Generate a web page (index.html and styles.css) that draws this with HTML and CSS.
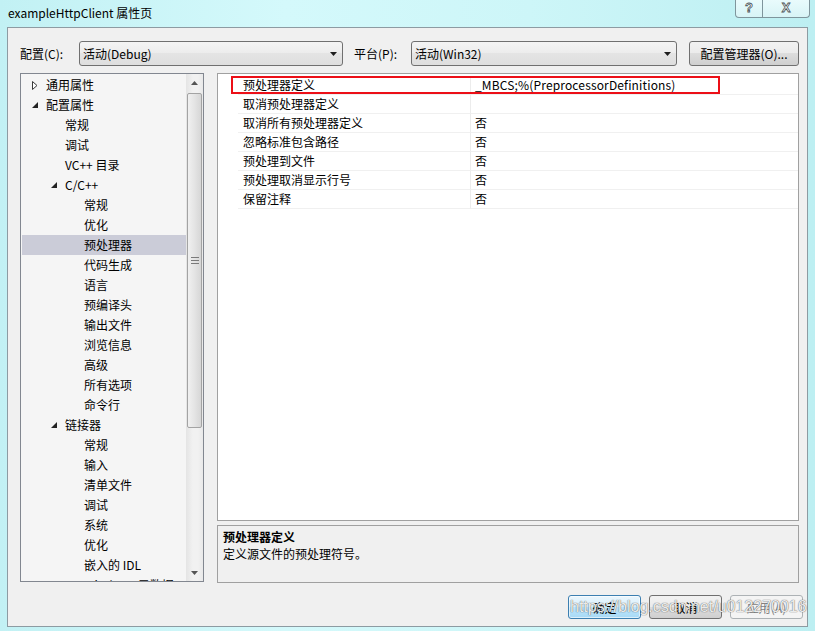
FILE: index.html
```html
<!DOCTYPE html>
<html lang="zh-CN">
<head>
<meta charset="utf-8">
<title>exampleHttpClient 属性页</title>
<link rel="stylesheet" href="styles.css">
</head>
<body>
<div class="window">
  <div class="titlebar">
    <div class="title">exampleHttpClient 属性页</div>
    <div class="caption-btns">
      <div class="cap-btn help">?</div>
      <div class="cap-btn close">X</div>
    </div>
  </div>
  <div class="client">
    <div class="config-row">
      <div class="lbl lbl-config">配置(C):</div>
      <div class="combo combo-config">
        <span>活动(Debug)</span>
        <svg class="drop" width="7" height="4" viewBox="0 0 7 4"><path d="M0 0 H7 L3.5 4 Z" fill="#1e1e1e"/></svg>
      </div>
      <div class="lbl lbl-platform">平台(P):</div>
      <div class="combo combo-platform">
        <span>活动(Win32)</span>
        <svg class="drop" width="7" height="4" viewBox="0 0 7 4"><path d="M0 0 H7 L3.5 4 Z" fill="#1e1e1e"/></svg>
      </div>
      <div class="btn btn-manager">配置管理器(O)...</div>
    </div>

    <div class="main">
      <div class="tree">
        <div class="tree-list">
          <div class="row l0"><span class="arr"><svg width="6" height="9" viewBox="0 0 6 9"><path d="M0.5 0.5 L5 4.5 L0.5 8.5 Z" fill="#fff" stroke="#3a3a3a" stroke-width="1"/></svg></span>通用属性</div>
          <div class="row l0"><span class="arr"><svg width="6" height="6" viewBox="0 0 6 6"><path d="M6 0 V6 H0 Z" fill="#222"/></svg></span>配置属性</div>
          <div class="row l1"><span class="arr"></span>常规</div>
          <div class="row l1"><span class="arr"></span>调试</div>
          <div class="row l1"><span class="arr"></span>VC++ 目录</div>
          <div class="row l1"><span class="arr"><svg width="6" height="6" viewBox="0 0 6 6"><path d="M6 0 V6 H0 Z" fill="#222"/></svg></span>C/C++</div>
          <div class="row l2"><span class="arr"></span>常规</div>
          <div class="row l2"><span class="arr"></span>优化</div>
          <div class="row l2 selected"><span class="arr"></span>预处理器</div>
          <div class="row l2"><span class="arr"></span>代码生成</div>
          <div class="row l2"><span class="arr"></span>语言</div>
          <div class="row l2"><span class="arr"></span>预编译头</div>
          <div class="row l2"><span class="arr"></span>输出文件</div>
          <div class="row l2"><span class="arr"></span>浏览信息</div>
          <div class="row l2"><span class="arr"></span>高级</div>
          <div class="row l2"><span class="arr"></span>所有选项</div>
          <div class="row l2"><span class="arr"></span>命令行</div>
          <div class="row l1"><span class="arr"><svg width="6" height="6" viewBox="0 0 6 6"><path d="M6 0 V6 H0 Z" fill="#222"/></svg></span>链接器</div>
          <div class="row l2"><span class="arr"></span>常规</div>
          <div class="row l2"><span class="arr"></span>输入</div>
          <div class="row l2"><span class="arr"></span>清单文件</div>
          <div class="row l2"><span class="arr"></span>调试</div>
          <div class="row l2"><span class="arr"></span>系统</div>
          <div class="row l2"><span class="arr"></span>优化</div>
          <div class="row l2"><span class="arr"></span>嵌入的 IDL</div>
          <div class="row l2"><span class="arr"></span>Windows 元数据</div>
        </div>
        <div class="vscroll">
          <div class="sb-arrow"><svg width="7" height="4" viewBox="0 0 7 4"><path d="M0 4 L3.5 0 L7 4 Z" fill="#555"/></svg></div>
          <div class="thumb">
            <svg class="grip" width="8" height="7" viewBox="0 0 8 7"><path d="M0 0.5 H8 M0 3.5 H8 M0 6.5 H8" stroke="#7a7a7a" stroke-width="1"/></svg>
          </div>
          <div class="sb-fill"></div>
          <div class="sb-arrow"><svg width="7" height="4" viewBox="0 0 7 4"><path d="M0 0 H7 L3.5 4 Z" fill="#555"/></svg></div>
        </div>
      </div>

      <div class="right">
        <div class="grid">
          <div class="grow"><div class="gutter"></div><div class="name">预处理器定义</div><div class="val">_MBCS;%(PreprocessorDefinitions)</div></div>
          <div class="grow"><div class="gutter"></div><div class="name">取消预处理器定义</div><div class="val"></div></div>
          <div class="grow"><div class="gutter"></div><div class="name">取消所有预处理器定义</div><div class="val">否</div></div>
          <div class="grow"><div class="gutter"></div><div class="name">忽略标准包含路径</div><div class="val">否</div></div>
          <div class="grow"><div class="gutter"></div><div class="name">预处理到文件</div><div class="val">否</div></div>
          <div class="grow"><div class="gutter"></div><div class="name">预处理取消显示行号</div><div class="val">否</div></div>
          <div class="grow"><div class="gutter"></div><div class="name">保留注释</div><div class="val">否</div></div>
          <div class="redbox"></div>
        </div>
        <div class="desc">
          <div class="desc-title">预处理器定义</div>
          <div class="desc-text">定义源文件的预处理符号。</div>
        </div>
      </div>
    </div>

    <div class="footer">
      <div class="btn btn-default">确定</div>
      <div class="btn">取消</div>
      <div class="btn btn-disabled">应用(A)</div>
      <div class="watermark">https://blog.csdn.net/u012270016</div>
    </div>
  </div>
</div>
</body>
</html>
```

FILE: styles.css
```css
* { box-sizing: border-box; }
html, body { margin: 0; padding: 0; }
body {
  width: 815px;
  height: 631px;
  overflow: hidden;
  font-family: "Noto Sans CJK SC", "Microsoft YaHei", sans-serif;
  font-size: 12px;
  color: #000;
  background: #c8f3f6;
}
.window {
  width: 815px;
  height: 631px;
  display: flex;
  flex-direction: column;
  padding: 0 7px 4px 7px;
  background: linear-gradient(90deg, #c2f1f4 0%, #d4f9fb 35%, #cdf6f8 65%, #bdeff2 100%);
}
.titlebar {
  height: 27px;
  display: flex;
  align-items: flex-start;
  flex: none;
}
.title {
  padding-left: 1px;
  line-height: 26px;
  color: #000;
}
.caption-btns {
  margin-left: auto;
  margin-right: -2px;
  display: flex;
}
.cap-btn {
  height: 18px;
  border: 1px solid #7f959c;
  border-top: none;
  background: linear-gradient(#e9fbfc, #d8f4f6);
  font-family: "Liberation Sans", sans-serif;
  font-weight: bold;
  color: #fff;
  -webkit-text-stroke: 0.8px #4c5558;
  text-align: center;
  line-height: 16px;
}
.help {
  width: 28px;
  border-bottom-left-radius: 4px;
  font-size: 13px;
}
.close {
  width: 47px;
  border-left: none;
  border-bottom-right-radius: 4px;
  font-size: 13px;
}
.client {
  height: 600px;
  border: 1px solid #8d9ba2;
  background: #f0f0f0;
  padding: 13px 8px 0 12px;
  display: flex;
  flex-direction: column;
}
.config-row {
  height: 25px;
  display: flex;
  align-items: center;
  flex: none;
}
.lbl { line-height: 25px; }
.lbl-config { width: 59px; }
.lbl-platform { width: 57px; margin-left: 11px; }
.combo {
  height: 25px;
  border: 1px solid #707070;
  border-radius: 3px;
  background: linear-gradient(#f4f4f4, #ececec 50%, #e4e4e4 50%, #dedede);
  display: flex;
  align-items: center;
  padding: 0 5px 0 3px;
}
.combo span { flex: 1; }
.combo-config { width: 264px; }
.combo-platform { width: 266px; }
.btn {
  width: 73px;
  height: 24px;
  border: 1px solid #707070;
  border-radius: 3px;
  background: linear-gradient(#f2f2f2, #ebebeb 50%, #dddddd 50%, #cfcfcf);
  display: flex;
  align-items: center;
  justify-content: center;
}
.btn-manager {
  width: 110px;
  height: 25px;
  margin-left: 12px;
}
.main {
  margin-top: 7px;
  height: 510px;
  display: flex;
  flex: none;
}
.tree {
  width: 184px;
  height: 509px;
  border: 1px solid #828790;
  background: #f5f5f5;
  display: flex;
  overflow: hidden;
}
.tree-list {
  flex: 1;
  padding: 1px 0 0 1px;
  overflow: hidden;
}
.row {
  height: 20px;
  line-height: 20px;
  display: flex;
  align-items: center;
  white-space: nowrap;
}
.row.l0 { padding-left: 10px; }
.row.l1 { padding-left: 29px; }
.row.l2 { padding-left: 48px; }
.row.selected { background: #cbccd8; }
.arr {
  width: 14px;
  height: 20px;
  display: flex;
  align-items: center;
  flex: none;
}
.arr svg { display: block; }
.vscroll {
  width: 17px;
  display: flex;
  flex-direction: column;
  background: linear-gradient(90deg, #e4e4e4, #f1f1f1 40%, #f1f1f1 70%, #e9e9e9);
}
.sb-arrow {
  height: 17px;
  display: flex;
  align-items: center;
  justify-content: center;
  flex: none;
}
.thumb {
  margin: 2px 0 0 1px;
  width: 15px;
  height: 335px;
  border: 1px solid #a3a3a3;
  border-radius: 2px;
  background: linear-gradient(90deg, #f0f0f0, #e4e4e4 50%, #d6d6d6);
  display: flex;
  align-items: center;
  justify-content: center;
  flex: none;
}
.sb-fill { flex: 1; }
.right {
  margin-left: 13px;
  width: 582px;
  display: flex;
  flex-direction: column;
}
.grid {
  position: relative;
  height: 448px;
  border: 1px solid #a0a0a0;
  background: #fff;
  padding-top: 2px;
}
.grow {
  height: 19px;
  display: flex;
}
.gutter {
  width: 20px;
  flex: none;
}
.name, .val {
  line-height: 18px;
  border-bottom: 1px solid #f0f0f0;
  white-space: nowrap;
}
.name {
  width: 233px;
  flex: none;
  padding-left: 5px;
  border-right: 1px solid #ececec;
}
.val {
  flex: 1;
  padding-left: 4px;
  letter-spacing: 0.15px;
}
.redbox {
  position: absolute;
  left: 13px;
  top: 2px;
  width: 489px;
  height: 18px;
  border: 2px solid #ec0f17;
}
.desc {
  margin-top: 4px;
  height: 58px;
  border: 1px solid #a0a0a0;
  background: #f0f0f0;
  padding: 2px 5px;
}
.desc-title {
  font-weight: bold;
  line-height: 17px;
}
.desc-text { line-height: 17px; }
.footer {
  position: relative;
  margin-top: 12px;
  margin-right: -4px;
  display: flex;
  justify-content: flex-end;
  gap: 8px;
}
.btn-default {
  border-color: #3c7fb1;
  background: linear-gradient(#eaf6fd, #d9f0fc 50%, #bee6fd 50%, #a7d9f5);
  box-shadow: inset 0 0 0 1px rgba(255,255,255,0.6);
}
.btn-disabled {
  border-color: #adb2b5;
  background: #f4f4f4;
  color: #838383;
}
.watermark {
  position: absolute;
  left: 550px;
  top: 2px;
  font-family: "Liberation Sans", sans-serif;
  font-size: 16px;
  line-height: 20px;
  color: rgba(255,255,255,0.9);
  text-shadow: 0 0 1px rgba(70,70,70,0.85), 0 0 1px rgba(70,70,70,0.5);
  white-space: nowrap;
  pointer-events: none;
}
```
